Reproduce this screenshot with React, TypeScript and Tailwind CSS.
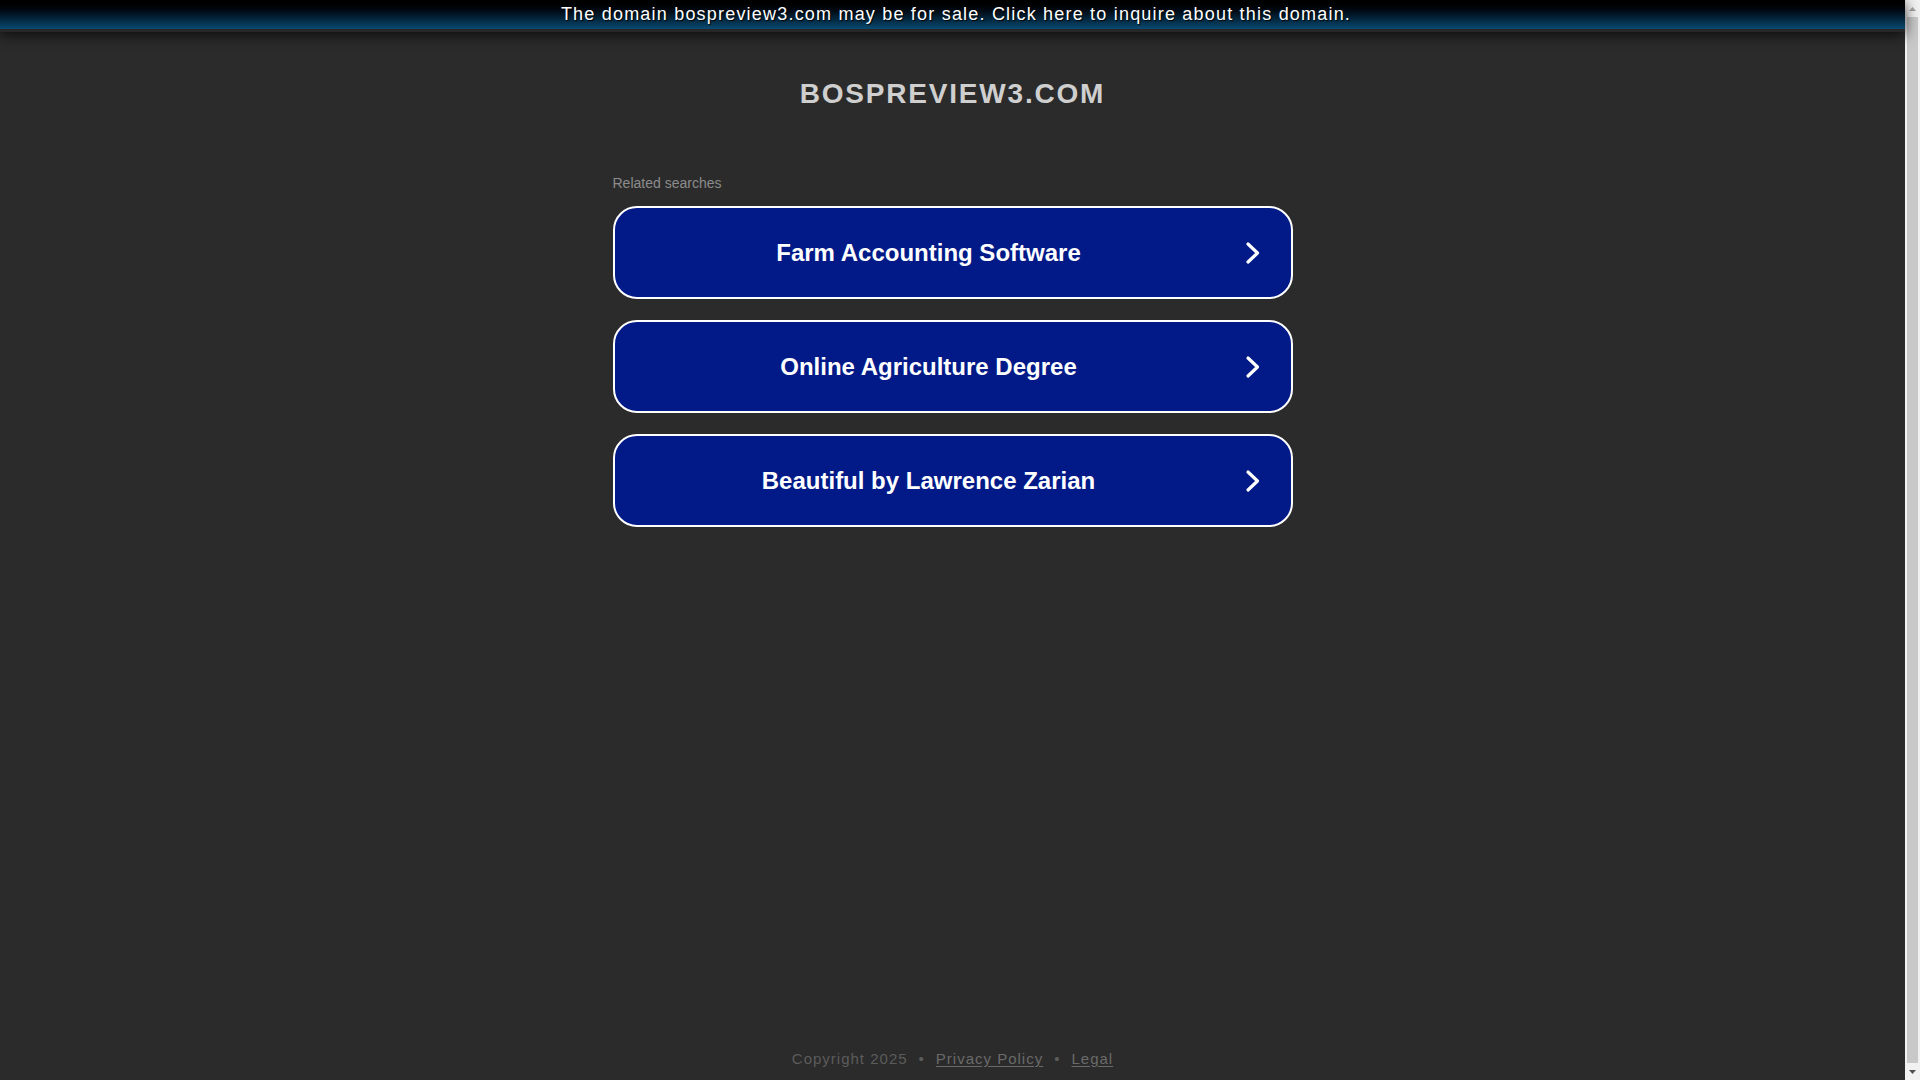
import React from 'react'

const SEARCHES = ['Farm Accounting Software', 'Online Agriculture Degree', 'Beautiful by Lawrence Zarian']

function Chevron() {
  return (
    <svg width="20" height="24" viewBox="0 0 20 24" fill="none" className="shrink-0">
      <polyline
        points="5,3 14.5,12 5,21"
        stroke="#ffffff"
        strokeWidth="3.2"
        strokeLinecap="round"
        strokeLinejoin="round"
      />
    </svg>
  )
}

// classic browser scrollbar, the page in the shot overflows by a few pixels
function Scrollbar() {
  return (
    <aside className="flex w-[15px] shrink-0 flex-col bg-[#f1f1f1]">
      <div className="flex h-[17px] items-center justify-center">
        <svg width="7" height="4" viewBox="0 0 7 4">
          <polygon points="0,4 3.5,0 7,4" fill="#a3a3a3" />
        </svg>
      </div>
      <div className="mx-[2px] flex-1 bg-[#c8c8c8]" />
      <div className="flex h-[17px] items-center justify-center">
        <svg width="7" height="4" viewBox="0 0 7 4">
          <polygon points="0,0 3.5,4 7,0" fill="#505050" />
        </svg>
      </div>
    </aside>
  )
}

export default function App() {
  return (
    <div className="flex h-screen overflow-hidden bg-[#2b2b2b]" style={{ fontFamily: '"Liberation Sans", Arial, sans-serif' }}>
      <main className="flex min-w-0 flex-1 flex-col">
        {/* Sale banner */}
        <div className="relative z-10 border-b-[3px] border-[#272727] bg-gradient-to-b from-[#000000] to-[#0b4b72] shadow-[0_3px_14px_rgba(0,0,0,0.75)]">
          <p className="h-[29px] pl-[7px] pt-px text-center text-[18px] leading-[27px] tracking-[1.2px] text-white [text-shadow:1px_1px_1px_rgba(0,0,0,0.9)]">
            The domain bospreview3.com may be for sale. Click here to inquire about this domain.
          </p>
        </div>

        <h1 className="mt-[46px] text-center text-[28px] font-bold leading-[32px] tracking-[1.8px] text-[#cfcfcf]">
          BOSPREVIEW3.COM
        </h1>

        <div className="mx-auto mt-[65px] w-[680px]">
          <p className="text-[14px] leading-[16px] text-[#8c8c8c]">Related searches</p>

          <div className="mt-[15px] flex flex-col gap-[21px]">
            {SEARCHES.map((s) => (
              <div
                key={s}
                className="flex h-[93px] items-center rounded-[24px] border-2 border-white bg-[#011a88] pr-[28px]"
              >
                <span className="flex-1 text-center text-[24px] font-bold leading-[28px] text-white">{s}</span>
                <Chevron />
              </div>
            ))}
          </div>
        </div>

        <footer className="mt-auto pb-[12px] text-center text-[15px] leading-[18px] tracking-[1px] text-[#5c5c5c]">
          <span>Copyright 2025</span>
          <span className="mx-[11px]">•</span>
          <span className="text-[#6a6a6a] underline underline-offset-2">Privacy Policy</span>
          <span className="mx-[11px]">•</span>
          <span className="text-[#6a6a6a] underline underline-offset-2">Legal</span>
        </footer>
      </main>
      <Scrollbar />
    </div>
  )
}
